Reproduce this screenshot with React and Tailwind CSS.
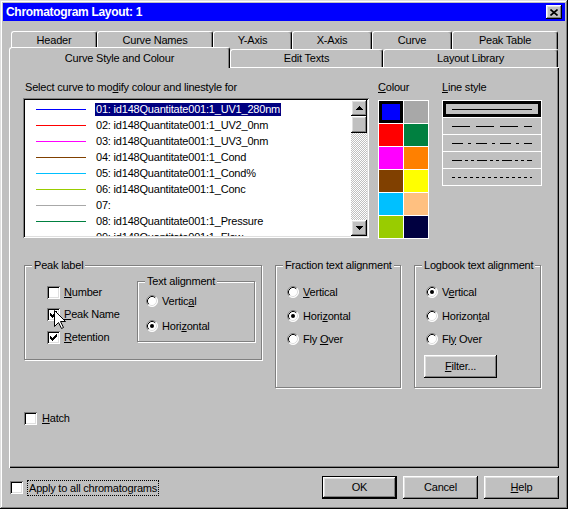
import React from "react";

const RAISED =
  "shadow-[inset_-1px_-1px_#000,inset_1px_1px_#fff,inset_-2px_-2px_#808080,inset_2px_2px_#dfdfdf]";
const SUNKEN =
  "shadow-[inset_1px_1px_#808080,inset_-1px_-1px_#fff,inset_2px_2px_#000,inset_-2px_-2px_#dfdfdf]";

function U({ children }) {
  return <span className="underline decoration-1 underline-offset-[1px]">{children}</span>;
}

function Check({ checked }) {
  return (
    <div className={`w-[13px] h-[13px] bg-white shrink-0 flex items-center justify-center ${SUNKEN}`}>
      {checked && (
        <svg width="7" height="7" viewBox="0 0 7 7" shapeRendering="crispEdges">
          <rect x="0" y="2" width="1" height="3" fill="#000" />
          <rect x="1" y="3" width="1" height="3" fill="#000" />
          <rect x="2" y="4" width="1" height="3" fill="#000" />
          <rect x="3" y="3" width="1" height="3" fill="#000" />
          <rect x="4" y="2" width="1" height="3" fill="#000" />
          <rect x="5" y="1" width="1" height="3" fill="#000" />
          <rect x="6" y="0" width="1" height="3" fill="#000" />
        </svg>
      )}
    </div>
  );
}

function Radio({ checked }) {
  return (
    <svg width="12" height="12" viewBox="0 0 12 12" className="shrink-0">
      <circle cx="6" cy="6" r="5.5" fill="#fff" />
      <path d="M2.11 9.89 A5.5 5.5 0 0 1 9.89 2.11" stroke="#808080" fill="none" />
      <path d="M9.89 2.11 A5.5 5.5 0 0 1 2.11 9.89" stroke="#fff" fill="none" />
      <path d="M2.82 9.18 A4.5 4.5 0 0 1 9.18 2.82" stroke="#000" fill="none" />
      <path d="M9.18 2.82 A4.5 4.5 0 0 1 2.82 9.18" stroke="#dfdfdf" fill="none" />
      {checked && <circle cx="6" cy="6" r="2" fill="#000" />}
    </svg>
  );
}

function CheckRow({ checked, children, className = "" }) {
  return (
    <div className={`flex items-center gap-[4px] h-[13px] ${className}`}>
      <Check checked={checked} />
      <span className="whitespace-nowrap">{children}</span>
    </div>
  );
}

function RadioRow({ checked, children, className = "" }) {
  return (
    <div className={`flex items-center gap-[4px] h-[12px] ${className}`}>
      <Radio checked={checked} />
      <span className="whitespace-nowrap">{children}</span>
    </div>
  );
}

function Group({ title, className = "", children }) {
  return (
    <div
      className={`relative border border-[#808080] shadow-[1px_1px_0_#fff,inset_1px_1px_0_#fff] ${className}`}
    >
      <span className="absolute left-[7px] -top-[7px] px-[2px] bg-[#c0c0c0] leading-[13px] whitespace-nowrap">
        {title}
      </span>
      {children}
    </div>
  );
}

function Button({ children, isDefault, className = "" }) {
  return (
    <div
      className={`h-[23px] flex items-center justify-center bg-[#c0c0c0] ${
        isDefault ? "border border-black" : ""
      } ${className}`}
    >
      <div className={`w-full h-full flex items-center justify-center ${RAISED}`}>{children}</div>
    </div>
  );
}

const curves = [
  ["#0000ff", "01: id148Quantitate001:1_UV1_280nm"],
  ["#ff0000", "02: id148Quantitate001:1_UV2_0nm"],
  ["#ff00ff", "03: id148Quantitate001:1_UV3_0nm"],
  ["#804000", "04: id148Quantitate001:1_Cond"],
  ["#00c0ff", "05: id148Quantitate001:1_Cond%"],
  ["#99cc00", "06: id148Quantitate001:1_Conc"],
  ["#a8a8a8", "07:"],
  ["#008040", "08: id148Quantitate001:1_Pressure"],
  ["#ff8000", "09: id148Quantitate001:1_Flow"],
];

const colours = [
  "bg-[#0000ff] shadow-[inset_0_0_0_3px_#000]",
  "bg-[#a8a8a8]",
  "bg-[#ff0000]",
  "bg-[#008040]",
  "bg-[#ff00ff]",
  "bg-[#ff8000]",
  "bg-[#804000]",
  "bg-[#ffff00]",
  "bg-[#00c0ff]",
  "bg-[#ffc080]",
  "bg-[#99cc00]",
  "bg-[#000040]",
];

const patterns = ["", "18 6", "11 5 3 5", "10 3 3 3 3 3", "3 3"];

function Tab({ className = "", children }) {
  return (
    <div
      className={`h-[18px] flex items-center justify-center rounded-t-[3px] border-l border-t border-r border-l-white border-t-white border-r-black shadow-[inset_-1px_0_#808080] whitespace-nowrap ${className}`}
    >
      {children}
    </div>
  );
}

function ScrollBtn({ down }) {
  return (
    <div className={`h-[16px] bg-[#c0c0c0] flex items-center justify-center ${RAISED}`}>
      <svg width="7" height="4" viewBox="0 0 7 4" shapeRendering="crispEdges">
        {down ? (
          <path d="M0 0 H7 V1 H6 V2 H5 V3 H4 V4 H3 V3 H2 V2 H1 V1 H0 Z" fill="#000" />
        ) : (
          <path d="M3 0 H4 V1 H5 V2 H6 V3 H7 V4 H0 V3 H1 V2 H2 V1 H3 Z" fill="#000" />
        )}
      </svg>
    </div>
  );
}

export default function App() {
  return (
    <div
      className={`relative w-[568px] h-[509px] bg-[#c0c0c0] p-[3px] font-['Liberation_Sans',Arial,sans-serif] text-[11px] leading-[13px] tracking-[-0.2px] text-black flex flex-col shadow-[inset_-1px_-1px_#000,inset_1px_1px_#dfdfdf,inset_-2px_-2px_#808080,inset_2px_2px_#fff]`}
    >
      {/* Title bar */}
      <div className="h-[18px] bg-[#0000ff] flex items-center justify-between pl-[3px] pr-[3px]">
        <span className="text-white font-bold text-[12px] tracking-[-0.3px] leading-[14px]">
          Chromatogram Layout: 1
        </span>
        <div className={`w-[16px] h-[14px] bg-[#c0c0c0] flex items-center justify-center ${RAISED}`}>
          <svg width="8" height="7" viewBox="0 0 8 7">
            <path d="M0.5 0.5 L7.5 6.5 M7.5 0.5 L0.5 6.5" stroke="#000" strokeWidth="1.6" />
          </svg>
        </div>
      </div>

      {/* Tabs row 1 */}
      <div className="mt-[10px] flex pl-[8px] h-[18px]">
        <Tab className="w-[86px]">Header</Tab>
        <Tab className="w-[116px]">Curve Names</Tab>
        <Tab className="w-[79px]">Y-Axis</Tab>
        <Tab className="w-[80px]">X-Axis</Tab>
        <Tab className="w-[80px]">Curve</Tab>
        <Tab className="w-[106px]">Peak Table</Tab>
      </div>
      {/* Tabs row 2 */}
      <div className="flex pl-[6px] h-[18px]">
        <div className="relative z-10 -mt-[2px] h-[21px] w-[221px] bg-[#c0c0c0] flex justify-center pt-[4px] rounded-t-[3px] border-l border-t border-r border-l-white border-t-white border-r-black shadow-[inset_-1px_0_#808080] whitespace-nowrap">
          Curve Style and Colour
        </div>
        <Tab className="w-[153px]">Edit Texts</Tab>
        <Tab className="w-[175px]">Layout Library</Tab>
      </div>

      {/* Panel */}
      <div className="ml-[6px] w-[550px] h-[401px] border-t border-l border-white shadow-[inset_-1px_-1px_#000,inset_-2px_-2px_#808080] flex flex-col">
        <div className="flex items-start pt-[13px] pl-[13px]">
          {/* Curve list */}
          <div className="w-[346px] flex flex-col">
            <div className="h-[13px] mb-[4px] pl-[2px] whitespace-nowrap">
              Select curve to mo<U>d</U>ify colour and linestyle for
            </div>
            <div className={`h-[140px] bg-white p-[2px] flex ${SUNKEN}`}>
              <div className="flex-1 flex flex-col overflow-hidden pt-[1px]">
                {curves.map(([c, t], i) => (
                  <div key={i} className="h-[16px] shrink-0 flex items-center">
                    <svg className="ml-[11px] shrink-0" width="50" height="1" shapeRendering="crispEdges">
                      <rect x="0" y="0" width="50" height="1" fill={c} />
                    </svg>
                    <span
                      className={`ml-[9px] px-[1px] whitespace-nowrap ${
                        i === 0 ? "bg-[#000080] text-white" : ""
                      }`}
                    >
                      {t}
                    </span>
                  </div>
                ))}
              </div>
              <div className="w-[16px] flex flex-col">
                <ScrollBtn />
                <div className={`h-[17px] bg-[#c0c0c0] ${RAISED}`} />
                <div className="flex-1 bg-[repeating-conic-gradient(#c0c0c0_0%_25%,#ffffff_0%_50%)] bg-[length:2px_2px]" />
                <ScrollBtn down />
              </div>
            </div>
          </div>

          {/* Colour */}
          <div className="ml-[9px] w-[51px] flex flex-col">
            <div className="h-[13px] mb-[6px] whitespace-nowrap">
              <U>C</U>olour
            </div>
            <div className="bg-white p-[1px] grid grid-cols-2 gap-[1px]">
              {colours.map((c, i) => (
                <div key={i} className={`h-[22px] ${c}`} />
              ))}
            </div>
          </div>

          {/* Line style */}
          <div className="ml-[13px] w-[100px] flex flex-col">
            <div className="h-[13px] mb-[6px] whitespace-nowrap">
              <U>L</U>ine style
            </div>
            <div className="bg-white p-[1px] flex flex-col gap-[1px]">
              {patterns.map((d, i) => (
                <div
                  key={i}
                  className={`h-[16px] bg-[#c0c0c0] flex items-center pl-[9px] ${
                    i === 0 ? "shadow-[inset_0_0_0_3px_#000]" : ""
                  }`}
                >
                  <svg width="80" height="1" shapeRendering="crispEdges">
                    <line x1="0" y1="0.5" x2="80" y2="0.5" stroke="#000" strokeDasharray={d || undefined} />
                  </svg>
                </div>
              ))}
            </div>
          </div>
        </div>

        {/* Group boxes */}
        <div className="flex items-start mt-[26px] pl-[14px]">
          <Group title="Peak label" className="w-[238px] h-[95px] flex items-start">
            <div className="w-[90px] ml-[22px] mt-[20px] flex flex-col">
              <CheckRow>
                <U>N</U>umber
              </CheckRow>
              <CheckRow checked className="mt-[9px]">
                <U>P</U>eak Name
              </CheckRow>
              <CheckRow checked className="mt-[10px]">
                <U>R</U>etention
              </CheckRow>
            </div>
            <Group title="Text alignment" className="mt-[15px] w-[118px] h-[61px] flex flex-col pl-[8px] pt-[13px]">
              <RadioRow>
                Vertic<U>a</U>l
              </RadioRow>
              <RadioRow checked className="mt-[13px]">
                Hori<U>z</U>ontal
              </RadioRow>
            </Group>
          </Group>

          <Group title="Fraction text alignment" className="ml-[13px] w-[126px] h-[123px] flex flex-col pl-[11px] pt-[20px]">
            <RadioRow>
              <U>V</U>ertical
            </RadioRow>
            <RadioRow checked className="mt-[12px]">
              Hori<U>z</U>ontal
            </RadioRow>
            <RadioRow className="mt-[11px]">
              Fly <U>O</U>ver
            </RadioRow>
          </Group>

          <Group title="Logbook text alignment" className="ml-[13px] w-[127px] h-[123px] flex flex-col pl-[11px] pt-[20px]">
            <RadioRow checked>
              V<U>e</U>rtical
            </RadioRow>
            <RadioRow className="mt-[12px]">
              Horizon<U>t</U>al
            </RadioRow>
            <RadioRow className="mt-[11px]">
              Fl<U>y</U> Over
            </RadioRow>
            <Button className="-ml-[2px] mt-[10px] w-[73px]">
              <U>F</U>ilter...
            </Button>
          </Group>
        </div>

        {/* Hatch */}
        <div className="mt-[24px] pl-[14px] flex items-center gap-[5px] h-[13px]">
          <Check />
          <span>
            <U>H</U>atch
          </span>
        </div>
      </div>

      {/* Bottom row */}
      <div className="mt-[8px] flex items-center h-[23px]">
        <div className="ml-[7px]">
          <Check />
        </div>
        <span className="ml-[4px] border border-dotted border-black px-[1px] leading-[14px] whitespace-nowrap">
          Apply to all chromatograms
        </span>
        <div className="ml-auto mr-[6px] flex gap-[6px]">
          <Button isDefault className="w-[75px]">OK</Button>
          <Button className="w-[75px]">Cancel</Button>
          <Button className="w-[75px]">
            <U>H</U>elp
          </Button>
        </div>
      </div>

      {/* Mouse cursor */}
      <svg
        className="absolute left-[54px] top-[310px] pointer-events-none"
        width="13"
        height="20"
        viewBox="0 0 13 20"
      >
        <path
          d="M0.5 0.5 L0.5 16.5 L4.5 12.5 L7.5 18.5 L9.5 17.5 L6.5 11.5 L11.5 11.5 Z"
          fill="#fff"
          stroke="#000"
          strokeWidth="1"
        />
      </svg>
    </div>
  );
}
